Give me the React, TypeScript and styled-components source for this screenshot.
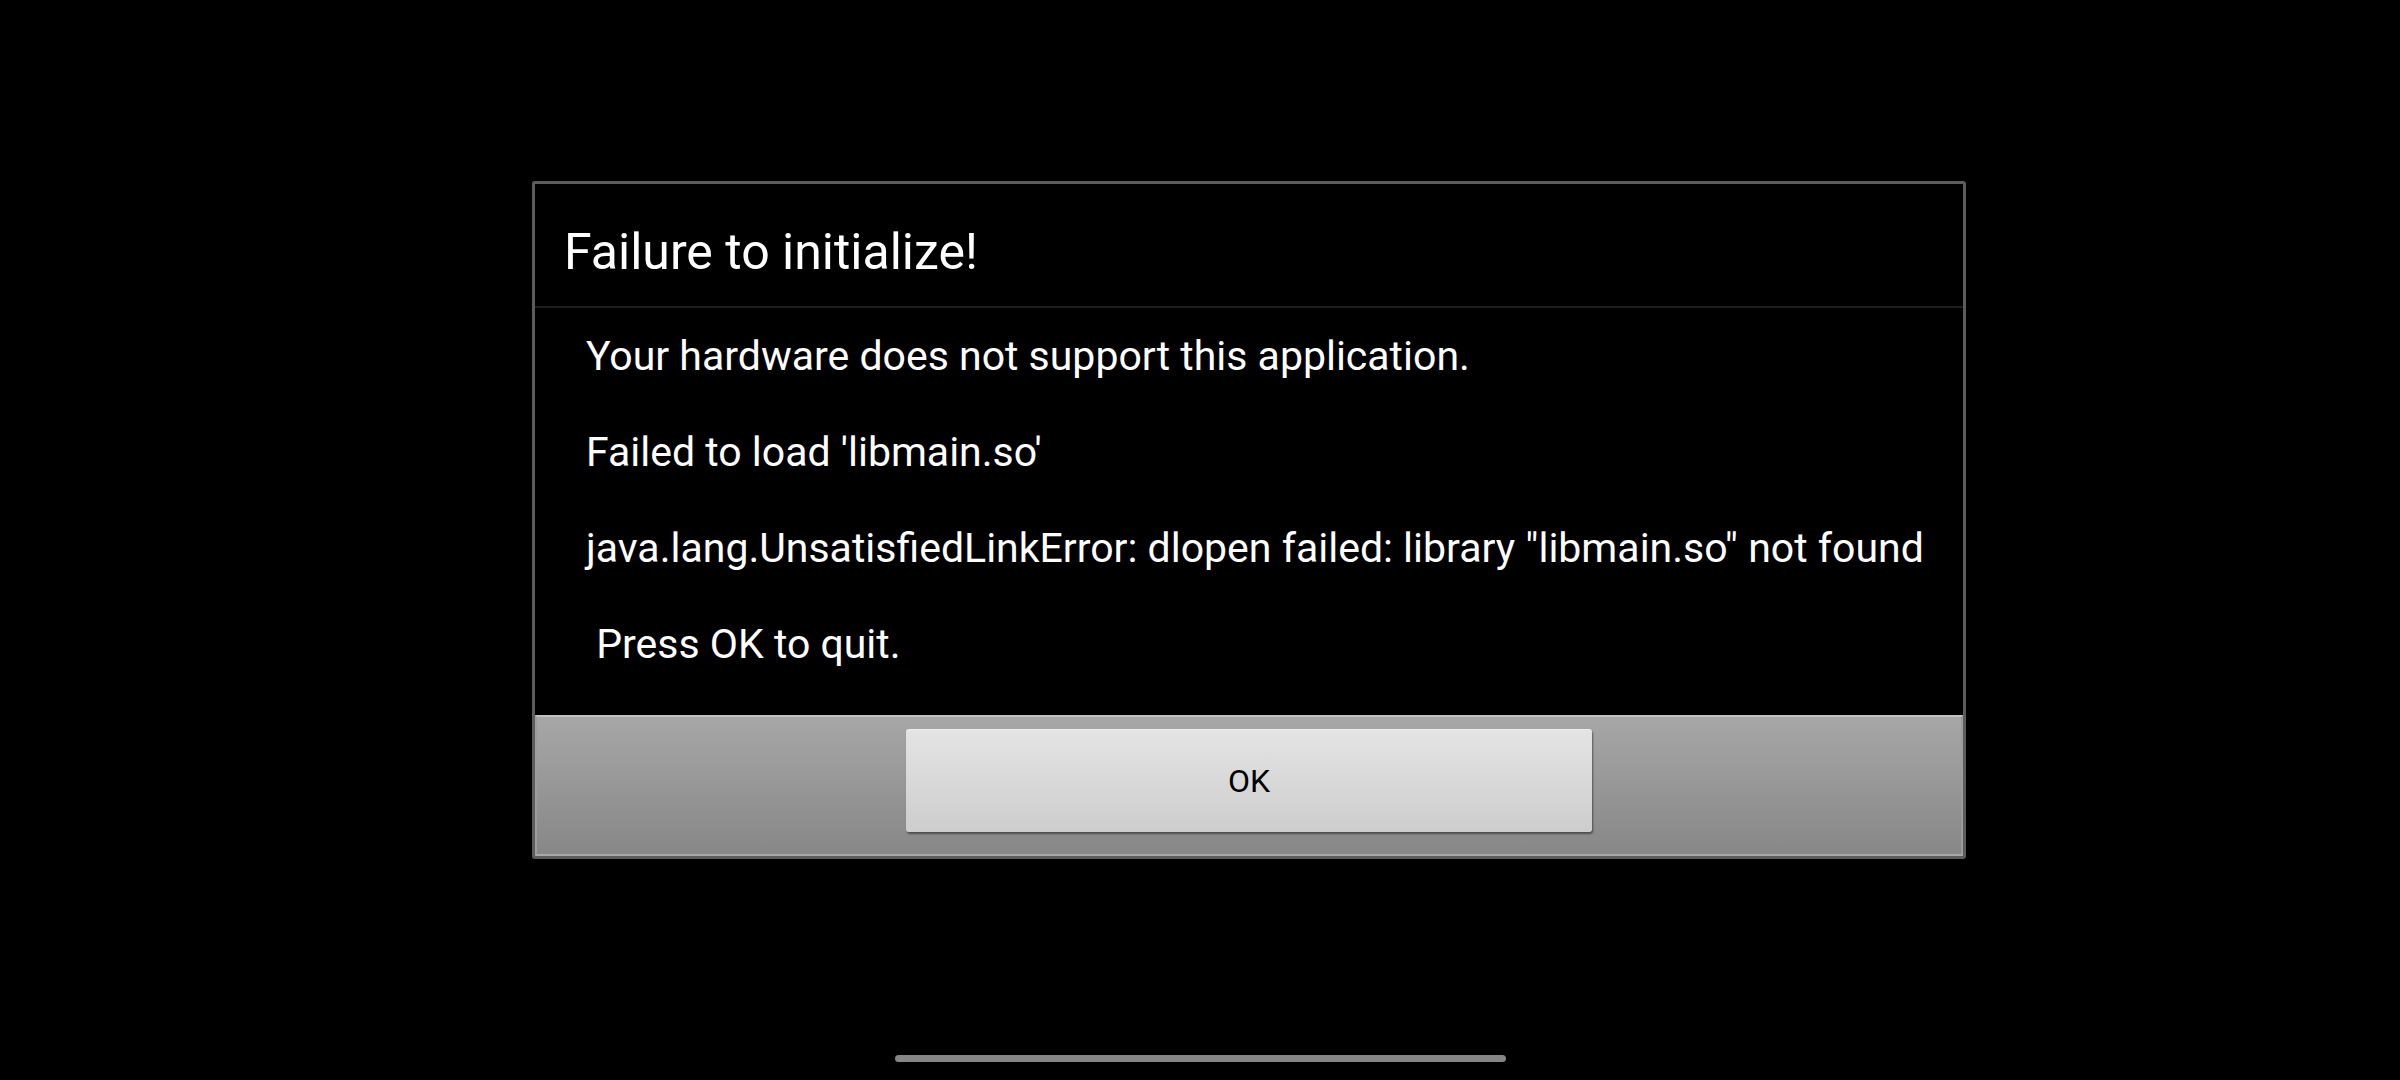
import styled, { createGlobalStyle } from 'styled-components';

const GlobalStyle = createGlobalStyle`
    html, body {
        margin: 0;
        padding: 0;
        background: #000;
    }
    body {
        font-family: Roboto, "Noto Sans", "Liberation Sans", sans-serif;
    }
`;

const Screen = styled.div`
    width: 2400px;
    height: 1080px;
    box-sizing: border-box;
    padding: 181px 0 0 532px;
    display: flex;
    flex-direction: column;
    align-items: flex-start;
    background: #000;
    overflow: hidden;
`;

const Dialog = styled.div`
    width: 1434px;
    height: 678px;
    box-sizing: border-box;
    border: 3px solid #5c5c5c;
    border-radius: 3px;
    background: #000;
    display: flex;
    flex-direction: column;
`;

const Title = styled.div`
    height: 124px;
    box-sizing: border-box;
    padding: 43px 0 0 29px;
    border-bottom: 2px solid #1e1e1e;
    color: #fff;
    font-size: 50px;
    line-height: 50px;
`;

const Body = styled.div`
    flex: 1;
    padding: 0 0 0 51px;
    display: flex;
    flex-direction: column;
`;

const Line = styled.p`
    margin: 0;
    color: #fff;
    font-size: 41px;
    line-height: 96px;
    white-space: pre;
`;

const ButtonBar = styled.div`
    height: 141px;
    box-sizing: border-box;
    border-top: 2px solid #c2c2c2;
    border-left: 2px solid #9c9c9c;
    border-right: 2px solid #9c9c9c;
    border-bottom: 2px solid #a8a8a8;
    background: linear-gradient(to bottom, #a7a7a7, #878787);
    display: flex;
    justify-content: center;
    padding-top: 12px;
`;

const Button = styled.button`
    width: 686px;
    height: 103px;
    border: none;
    border-top: 1px solid #eeeeee;
    border-radius: 3px;
    background: linear-gradient(to bottom, #e4e4e4, #cdcdcd);
    box-shadow: 1px 2px 2px rgba(0, 0, 0, 0.45);
    color: #000;
    font-family: Roboto, "Noto Sans", "Liberation Sans", sans-serif;
    font-size: 32px;
    padding: 0;
    cursor: pointer;
`;

const HomeBar = styled.div`
    margin: 196px 0 0 363px;
    width: 611px;
    height: 7px;
    border-radius: 4px;
    background: #858585;
`;

const lines = [
    'Your hardware does not support this application.',
    "Failed to load 'libmain.so'",
    'java.lang.UnsatisfiedLinkError: dlopen failed: library "libmain.so" not found',
    ' Press OK to quit.',
];

const App = () => {
    return (
        <>
            <GlobalStyle />
            <Screen>
                <Dialog>
                    <Title>Failure to initialize!</Title>
                    <Body>
                        {lines.map((line) => (
                            <Line key={line}>{line}</Line>
                        ))}
                    </Body>
                    <ButtonBar>
                        <Button>OK</Button>
                    </ButtonBar>
                </Dialog>
                <HomeBar />
            </Screen>
        </>
    );
};

export default App;
